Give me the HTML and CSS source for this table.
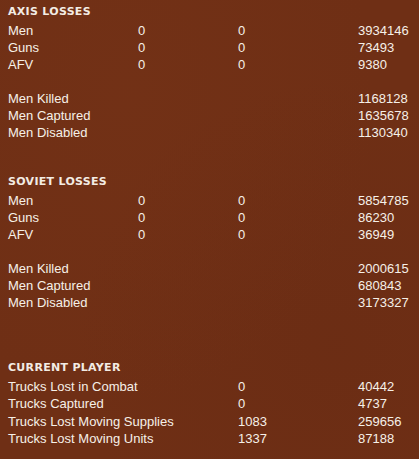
FILE: index.html
```html
<!DOCTYPE html>
<html>
<head>
<meta charset="utf-8">
<link rel="stylesheet" href="styles.css">
</head>
<body>
<div class="panel">
  <section class="sec sec-axis">
    <h2 class="head">AXIS LOSSES</h2>
    <div class="grid">
      <span>Men</span><span>0</span><span>0</span><span>3934146</span>
      <span>Guns</span><span>0</span><span>0</span><span>73493</span>
      <span>AFV</span><span>0</span><span>0</span><span>9380</span>
      <span class="blank"></span>
      <span>Men Killed</span><span></span><span></span><span>1168128</span>
      <span>Men Captured</span><span></span><span></span><span>1635678</span>
      <span>Men Disabled</span><span></span><span></span><span>1130340</span>
    </div>
  </section>
  <section class="sec sec-soviet">
    <h2 class="head">SOVIET LOSSES</h2>
    <div class="grid">
      <span>Men</span><span>0</span><span>0</span><span>5854785</span>
      <span>Guns</span><span>0</span><span>0</span><span>86230</span>
      <span>AFV</span><span>0</span><span>0</span><span>36949</span>
      <span class="blank"></span>
      <span>Men Killed</span><span></span><span></span><span>2000615</span>
      <span>Men Captured</span><span></span><span></span><span>680843</span>
      <span>Men Disabled</span><span></span><span></span><span>3173327</span>
    </div>
  </section>
  <section class="sec sec-player">
    <h2 class="head">CURRENT PLAYER</h2>
    <div class="grid grid-3">
      <span>Trucks Lost in Combat</span><span>0</span><span>40442</span>
      <span>Trucks Captured</span><span>0</span><span>4737</span>
      <span>Trucks Lost Moving Supplies</span><span>1083</span><span>259656</span>
      <span>Trucks Lost Moving Units</span><span>1337</span><span>87188</span>
    </div>
  </section>
</div>
</body>
</html>
```
FILE: styles.css
```css
html, body {
  margin: 0;
  padding: 0;
  background: #6f2f15;
}
body {
  width: 419px;
  height: 459px;
  overflow: hidden;
  background:
    radial-gradient(ellipse at 30% 20%, rgba(120,52,24,0.35), transparent 60%),
    radial-gradient(ellipse at 80% 75%, rgba(100,40,18,0.3), transparent 55%),
    #6f2f15;
  color: #f6f0e8;
  font-family: "Liberation Sans", Arial, sans-serif;
  font-size: 13px;
}
.panel {
  padding: 2px 0 0 8px;
}
.sec {
  display: flex;
  flex-direction: column;
}
.sec-soviet {
  margin-top: 31px;
}
.sec-player {
  margin-top: 47px;
}
.head {
  margin: 0;
  font-family: "DejaVu Sans", Verdana, sans-serif;
  font-weight: bold;
  font-size: 11px;
  line-height: 19px;
  color: #f3ece4;
  letter-spacing: 0.3px;
}
.grid {
  display: grid;
  grid-template-columns: 130px 100px 120px auto;
  grid-auto-rows: 17px;
  line-height: 17px;
  margin-top: 1px;
}
.grid-3 {
  grid-template-columns: 230px 120px auto;
  grid-auto-rows: 17.3px;
}
.blank {
  grid-column: 1 / -1;
}
```
